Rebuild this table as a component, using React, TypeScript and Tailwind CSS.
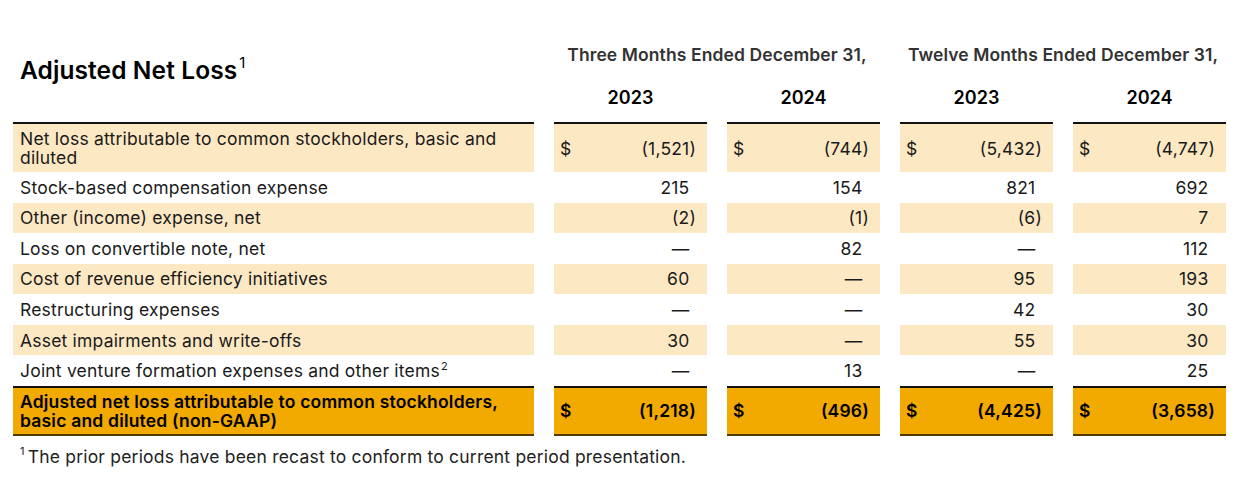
import React from "react";

type Row = {
  label: React.ReactNode;
  vals: string[];
  dollar?: boolean;
  shade?: boolean;
  tall?: boolean;
};

const rows: Row[] = [
  {
    label: (
      <>
        Net loss attributable to common stockholders, basic and
        <br />
        diluted
      </>
    ),
    vals: ["(1,521)", "(744)", "(5,432)", "(4,747)"],
    dollar: true,
    shade: true,
    tall: true,
  },
  { label: "Stock-based compensation expense", vals: ["215", "154", "821", "692"] },
  { label: "Other (income) expense, net", vals: ["(2)", "(1)", "(6)", "7"], shade: true },
  { label: "Loss on convertible note, net", vals: ["—", "82", "—", "112"] },
  { label: "Cost of revenue efficiency initiatives", vals: ["60", "—", "95", "193"], shade: true },
  { label: "Restructuring expenses", vals: ["—", "—", "42", "30"] },
  { label: "Asset impairments and write-offs", vals: ["30", "—", "55", "30"], shade: true },
  {
    label: (
      <>
        Joint venture formation expenses and other items
        <sup className="text-[11px] relative -top-[7px] ml-[1px]">2</sup>
      </>
    ),
    vals: ["—", "13", "—", "25"],
  },
];

function Amount({ v }: { v: string }) {
  const paren = v.endsWith(")");
  return (
    <span>
      {v}
      {!paren && <span className="invisible">)</span>}
    </span>
  );
}

const grid = "grid grid-cols-[521px_153px_153px_153px_153px] gap-x-[20px]";

export default function App() {
  return (
    <div
      className="w-[1244px] h-[480px] overflow-hidden bg-white pl-[13px] text-[#1a1a1a]"
      style={{ fontFamily: "Inter, 'Noto Sans', sans-serif" }}
    >
      {/* header */}
      <div className={grid}>
        <div className="row-span-2 pl-[7px] pt-[55px] text-[24.5px] font-semibold text-black leading-[30px] tracking-[0.1px]">
          Adjusted Net Loss
          <sup className="text-[15px] font-normal relative -top-[11px] ml-[2px]">1</sup>
        </div>
        <div className="col-span-2 h-[70px] flex items-end justify-center pb-[3px] text-[17.5px] font-semibold text-[#333] leading-[24px] tracking-[0.1px]">
          Three Months Ended December 31,
        </div>
        <div className="col-span-2 h-[70px] flex items-end justify-center pb-[3px] text-[17.5px] font-semibold text-[#333] leading-[24px] tracking-[0.1px]">
          Twelve Months Ended December 31,
        </div>
        {["2023", "2024", "2023", "2024"].map((y, i) => (
          <div
            key={i}
            className="h-[52px] pt-[16px] text-center text-[18px] font-semibold text-black leading-[24px]"
          >
            {y}
          </div>
        ))}
      </div>

      {/* body */}
      <div className="text-[17.5px] leading-[19px] tracking-[0.2px]">
        {rows.map((r, i) => {
          const bg = r.shade ? "bg-[#fde8c4]" : "";
          const h = r.tall ? "h-[50px] border-t-2 border-[#111]" : "h-[30.57px]";
          return (
            <div key={i} className={grid}>
              <div className={`${h} ${bg} pl-[7px] flex items-center`}>
                <div>{r.label}</div>
              </div>
              {r.vals.map((v, j) => (
                <div
                  key={j}
                  className={`${h} ${bg} pl-[6px] pr-[11px] flex items-center justify-between`}
                >
                  <span>{r.dollar ? "$" : ""}</span>
                  <Amount v={v} />
                </div>
              ))}
            </div>
          );
        })}
        <div className={`${grid} font-semibold text-black`}>
          <div className="h-[50px] bg-[#f2a900] border-t-2 border-[#111] border-b-2 border-b-[#4f3a05] pl-[7px] flex items-center">
            <div>
              Adjusted net loss attributable to common stockholders,
              <br />
              basic and diluted (non-GAAP)
            </div>
          </div>
          {["(1,218)", "(496)", "(4,425)", "(3,658)"].map((v, j) => (
            <div
              key={j}
              className="h-[50px] bg-[#f2a900] border-t-2 border-[#111] border-b-2 border-b-[#4f3a05] pl-[6px] pr-[11px] flex items-center justify-between"
            >
              <span>$</span>
              <span>{v}</span>
            </div>
          ))}
        </div>
      </div>

      {/* footnotes */}
      <div className="pl-[7px] pt-[9px] text-[17.5px] leading-[24px] text-[#222] tracking-[0.2px]">
        <p>
          <sup className="text-[11px] relative -top-[8px] mr-[3px]">1</sup>
          The prior periods have been recast to conform to current period presentation.
        </p>
        <p className="mt-[10px]">
          <sup className="text-[11px] relative -top-[8px]">2</sup>
        </p>
      </div>
    </div>
  );
}
